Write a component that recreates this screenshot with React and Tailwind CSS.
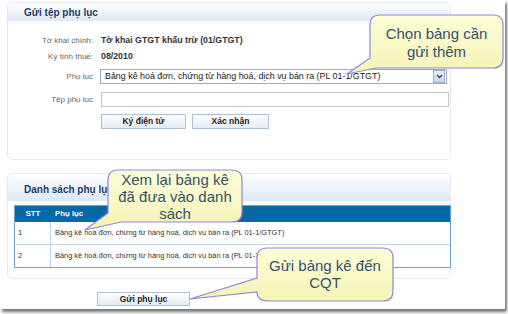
import React from "react";

const rowText = "Bảng kê hoá đơn, chứng từ hàng hoá, dịch vụ bán ra (PL 01-1/GTGT)";

function Btn({ children, className }) {
  return (
    <div
      className={
        "flex items-center justify-center border border-[#a9c1d9] bg-gradient-to-b from-white to-[#e3ebf4] text-[8.5px] font-bold text-[#222] " +
        className
      }
    >
      {children}
    </div>
  );
}

export default function App() {
  return (
    <div className="relative w-[508px] h-[314px] overflow-hidden bg-white font-['Liberation_Sans',Arial,sans-serif]">
      <div className="w-[505px] h-[309px] bg-white shadow-[2px_3px_3px_rgba(0,0,0,0.55)] flex flex-col">
        {/* Panel 1 */}
        <div className="mt-[2px] ml-[7px] w-[444px] h-[158px] border border-[#e6e9ed] rounded-[5px] flex flex-col">
          <div className="h-[18px] flex items-center pl-[16px] bg-gradient-to-b from-white to-[#dde9f6] rounded-t-[5px]">
            <span className="text-[10px] font-bold text-[#1d3d63]">Gửi tệp phụ lục</span>
          </div>
          <div className="flex flex-col">
            <div className="mt-[14px] h-[12px] flex items-center">
              <div className="w-[85px] text-right text-[8px] text-[#666]">Tờ khai chính:</div>
              <div className="ml-[8px] text-[8.8px] font-bold text-[#333]">Tờ khai GTGT khấu trừ (01/GTGT)</div>
            </div>
            <div className="mt-[4px] h-[12px] flex items-center">
              <div className="w-[85px] text-right text-[8px] text-[#666]">Kỳ tính thuế:</div>
              <div className="ml-[8px] text-[8.8px] font-bold text-[#333]">08/2010</div>
            </div>
            <div className="mt-[6px] h-[15px] flex items-center">
              <div className="w-[85px] text-right text-[8px] text-[#666]">Phụ lục</div>
              <div className="ml-[7px] w-[347px] h-[15px] border border-[#a5acb2] bg-white flex items-center">
                <span className="flex-1 pl-[4px] text-[8.9px] text-[#222] whitespace-nowrap overflow-hidden">{rowText}</span>
                <div className="w-[12px] h-[13px] mr-[1px] border border-[#98b2cf] bg-gradient-to-b from-[#e6eef8] to-[#c3d5ea] flex items-center justify-center">
                  <svg width="7" height="5" viewBox="0 0 7 5">
                    <path d="M1 1 L3.5 3.5 L6 1" stroke="#2b4a77" strokeWidth="1.4" fill="none" />
                  </svg>
                </div>
              </div>
            </div>
            <div className="mt-[8px] h-[15px] flex items-center">
              <div className="w-[85px] text-right text-[8px] text-[#666]">Tệp phụ lục</div>
              <div className="ml-[8px] w-[348px] h-[15px] border border-[#c4c8cc] bg-white" />
            </div>
            <div className="mt-[7px] flex ml-[93px] gap-[6px]">
              <Btn className="w-[85px] h-[15px]">Ký điện tử</Btn>
              <Btn className="w-[77px] h-[15px]">Xác nhận</Btn>
            </div>
          </div>
        </div>

        {/* Panel 2 */}
        <div className="mt-[13px] ml-[7px] w-[444px] h-[106px] border border-[#e6e9ed] rounded-[5px] flex flex-col">
          <div className="h-[27px] flex items-center pt-[4px] pl-[16px] bg-gradient-to-b from-white to-[#dde9f6] rounded-t-[5px]">
            <span className="text-[10px] font-bold text-[#1d3d63]">Danh sách phụ lục</span>
          </div>
          <div className="mt-[4px] ml-[6px] w-[437px] border border-[#6fa0cf] flex flex-col">
            <div className="h-[16px] bg-[#0868a3] flex items-center text-white text-[7.8px] font-bold">
              <div className="w-[36px] text-center">STT</div>
              <div className="pl-[4px]">Phụ lục</div>
            </div>
            <div className="h-[23px] flex items-center border-b border-[#bcd6ec] text-[7.4px] text-[#333]">
              <div className="w-[36px] h-full flex items-center pl-[3px] border-r border-[#bcd6ec]">1</div>
              <div className="pl-[4px] whitespace-nowrap">{rowText}</div>
            </div>
            <div className="h-[22px] flex items-center text-[7.4px] text-[#333]">
              <div className="w-[36px] h-full flex items-center pl-[3px] border-r border-[#bcd6ec]">2</div>
              <div className="pl-[4px] whitespace-nowrap">{rowText}</div>
            </div>
          </div>
        </div>

        <div className="mt-[13px] ml-[97px]">
          <Btn className="w-[93px] h-[14px]">Gửi phụ lục</Btn>
        </div>
      </div>

      {/* Callouts */}
      <svg className="absolute inset-0 pointer-events-none" width="508" height="314" viewBox="0 0 508 314">
        <defs>
          <linearGradient id="cg" x1="0" y1="0" x2="0" y2="1">
            <stop offset="0" stopColor="#fdfdd9" />
            <stop offset="1" stopColor="#f6f3b4" />
          </linearGradient>
        </defs>
        <path
          d="M380 15 H493 Q503 15 503 25 V58 Q503 68 493 68 H376 L347 74 L370 58 V25 Q370 15 380 15 Z"
          fill="url(#cg)"
          stroke="#8d87d9"
          strokeWidth="1.2"
        />
        <path
          d="M118 170 H232 Q242 170 242 180 V212 Q242 222 232 222 H121 L85 230 L108 213 V180 Q108 170 118 170 Z"
          fill="url(#cg)"
          stroke="#8d87d9"
          strokeWidth="1.2"
        />
        <path
          d="M267 248 H383 Q393 248 393 258 V291 Q393 301 383 301 H267 Q257 301 257 292 L190 299 L257 278 V258 Q257 248 267 248 Z"
          fill="url(#cg)"
          stroke="#8d87d9"
          strokeWidth="1.2"
        />
      </svg>
      <div className="absolute left-[370px] top-[25px] w-[133px] text-center text-[15px] leading-[18px] text-[#34506e]">
        Chọn bảng cần
        <br />
        gửi thêm
      </div>
      <div className="absolute left-[108px] top-[171px] w-[134px] text-center text-[15px] leading-[17px] text-[#34506e]">
        Xem lại bảng kê
        <br />
        đã đưa vào danh
        <br />
        sách
      </div>
      <div className="absolute left-[257px] top-[257px] w-[136px] text-center text-[15px] leading-[17px] text-[#34506e]">
        Gửi bảng kê đến
        <br />
        CQT
      </div>
    </div>
  );
}
